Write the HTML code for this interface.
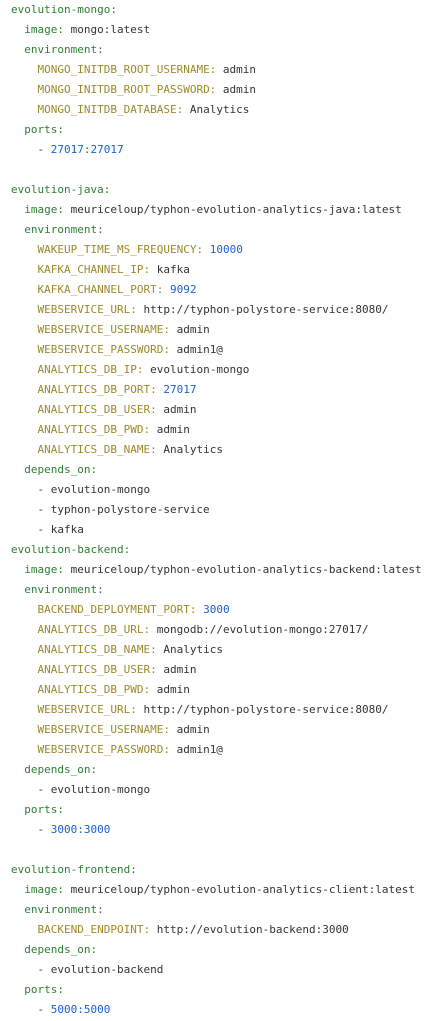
<!DOCTYPE html>
<html><head><style>
html,body{margin:0;padding:0;background:#fff;width:432px;height:1021px;overflow:hidden}
pre{margin:0;padding:0 0 0 11px;font-family:"DejaVu Sans Mono","Liberation Mono",monospace;font-size:11px;line-height:20px;color:#333;white-space:pre}
.k{color:#2e7d32}.e{color:#9a8a2c}.n{color:#1a5fd0}
</style></head><body><pre><span class="k">evolution-mongo:</span>
  <span class="k">image:</span> mongo:latest
  <span class="k">environment:</span>
    <span class="e">MONGO_INITDB_ROOT_USERNAME:</span> admin
    <span class="e">MONGO_INITDB_ROOT_PASSWORD:</span> admin
    <span class="e">MONGO_INITDB_DATABASE:</span> Analytics
  <span class="k">ports:</span>
    - <span class="n">27017:27017</span>

<span class="k">evolution-java:</span>
  <span class="k">image:</span> meuriceloup/typhon-evolution-analytics-java:latest
  <span class="k">environment:</span>
    <span class="e">WAKEUP_TIME_MS_FREQUENCY:</span> <span class="n">10000</span>
    <span class="e">KAFKA_CHANNEL_IP:</span> kafka
    <span class="e">KAFKA_CHANNEL_PORT:</span> <span class="n">9092</span>
    <span class="e">WEBSERVICE_URL:</span> http://typhon-polystore-service:8080/
    <span class="e">WEBSERVICE_USERNAME:</span> admin
    <span class="e">WEBSERVICE_PASSWORD:</span> admin1@
    <span class="e">ANALYTICS_DB_IP:</span> evolution-mongo
    <span class="e">ANALYTICS_DB_PORT:</span> <span class="n">27017</span>
    <span class="e">ANALYTICS_DB_USER:</span> admin
    <span class="e">ANALYTICS_DB_PWD:</span> admin
    <span class="e">ANALYTICS_DB_NAME:</span> Analytics
  <span class="k">depends_on:</span>
    - evolution-mongo
    - typhon-polystore-service
    - kafka
<span class="k">evolution-backend:</span>
  <span class="k">image:</span> meuriceloup/typhon-evolution-analytics-backend:latest
  <span class="k">environment:</span>
    <span class="e">BACKEND_DEPLOYMENT_PORT:</span> <span class="n">3000</span>
    <span class="e">ANALYTICS_DB_URL:</span> mongodb://evolution-mongo:27017/
    <span class="e">ANALYTICS_DB_NAME:</span> Analytics
    <span class="e">ANALYTICS_DB_USER:</span> admin
    <span class="e">ANALYTICS_DB_PWD:</span> admin
    <span class="e">WEBSERVICE_URL:</span> http://typhon-polystore-service:8080/
    <span class="e">WEBSERVICE_USERNAME:</span> admin
    <span class="e">WEBSERVICE_PASSWORD:</span> admin1@
  <span class="k">depends_on:</span>
    - evolution-mongo
  <span class="k">ports:</span>
    - <span class="n">3000:3000</span>

<span class="k">evolution-frontend:</span>
  <span class="k">image:</span> meuriceloup/typhon-evolution-analytics-client:latest
  <span class="k">environment:</span>
    <span class="e">BACKEND_ENDPOINT:</span> http://evolution-backend:3000
  <span class="k">depends_on:</span>
    - evolution-backend
  <span class="k">ports:</span>
    - <span class="n">5000:5000</span>
</pre></body></html>
